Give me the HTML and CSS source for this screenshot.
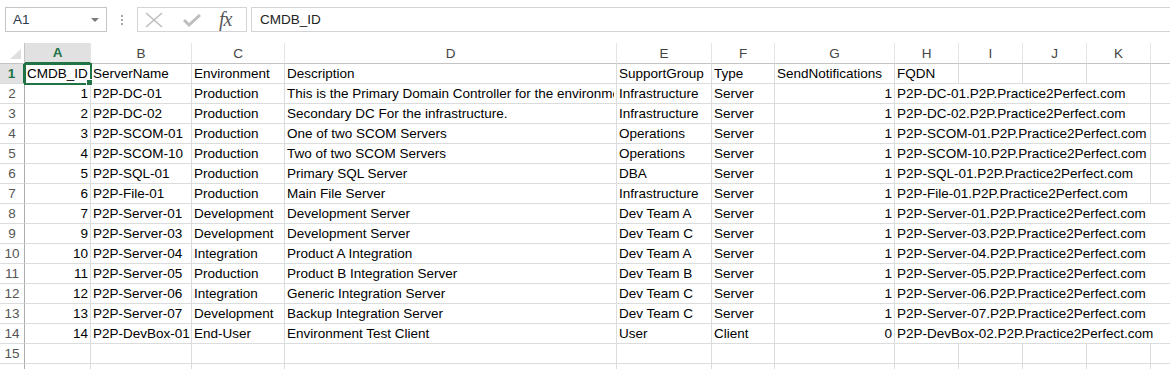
FILE: index.html
```html
<!DOCTYPE html>
<html lang="en">
<head>
  <meta charset="UTF-8">
  <title>CMDB - Sheet1</title>
  <link rel="stylesheet" href="styles.css">
</head>
<body>

  <!-- Formula Bar -->
  <div class="formula-bar">
    <div class="name-box">
      <span class="name-box-text">A1</span>
      <span class="name-box-arrow"></span>
    </div>
    <div class="grip">
      <span></span><span></span><span></span>
    </div>
    <div class="fx-buttons">
      <svg class="fx-icon" width="18" height="16" viewBox="0 0 18 16">
        <path d="M1 1 L17 15 M17 1 L1 15" stroke="#bdbdbd" stroke-width="1.6" fill="none"/>
      </svg>
      <svg class="fx-icon" width="18" height="16" viewBox="0 0 18 16">
        <path d="M1 8 L6 13 L17 3" stroke="#bdbdbd" stroke-width="3" fill="none"/>
      </svg>
      <span class="fx-label">fx</span>
    </div>
    <div class="formula-input">CMDB_ID</div>
  </div>

  <!-- Worksheet -->
  <table class="sheet">
    <colgroup>
      <col class="col-head">
      <col style="width:66px">
      <col style="width:101px">
      <col style="width:93px">
      <col style="width:332px">
      <col style="width:95px">
      <col style="width:63px">
      <col style="width:120px">
      <col style="width:64px">
      <col style="width:64px">
      <col style="width:64px">
      <col style="width:64px">
      <col style="width:64px">
    </colgroup>
    <thead>
      <tr>
        <th class="corner"><span class="corner-tri"></span></th>
        <th class="active-col">A</th>
        <th>B</th><th>C</th><th>D</th><th>E</th><th>F</th><th>G</th>
        <th>H</th><th>I</th><th>J</th><th>K</th><th></th>
      </tr>
    </thead>
    <tbody id="rows"></tbody>
  </table>

  <script>
    // Sheet data: id, server, environment, description, support group, type, notify, fqdn
    const data = [
      [1, 'P2P-DC-01', 'Production', 'This is the Primary Domain Controller for the environment.', 'Infrastructure', 'Server', 1, 'P2P-DC-01.P2P.Practice2Perfect.com'],
      [2, 'P2P-DC-02', 'Production', 'Secondary DC For the infrastructure.', 'Infrastructure', 'Server', 1, 'P2P-DC-02.P2P.Practice2Perfect.com'],
      [3, 'P2P-SCOM-01', 'Production', 'One of two SCOM Servers', 'Operations', 'Server', 1, 'P2P-SCOM-01.P2P.Practice2Perfect.com'],
      [4, 'P2P-SCOM-10', 'Production', 'Two of two SCOM Servers', 'Operations', 'Server', 1, 'P2P-SCOM-10.P2P.Practice2Perfect.com'],
      [5, 'P2P-SQL-01', 'Production', 'Primary SQL Server', 'DBA', 'Server', 1, 'P2P-SQL-01.P2P.Practice2Perfect.com'],
      [6, 'P2P-File-01', 'Production', 'Main File Server', 'Infrastructure', 'Server', 1, 'P2P-File-01.P2P.Practice2Perfect.com'],
      [7, 'P2P-Server-01', 'Development', 'Development Server', 'Dev Team A', 'Server', 1, 'P2P-Server-01.P2P.Practice2Perfect.com'],
      [9, 'P2P-Server-03', 'Development', 'Development Server', 'Dev Team C', 'Server', 1, 'P2P-Server-03.P2P.Practice2Perfect.com'],
      [10, 'P2P-Server-04', 'Integration', 'Product A Integration', 'Dev Team A', 'Server', 1, 'P2P-Server-04.P2P.Practice2Perfect.com'],
      [11, 'P2P-Server-05', 'Production', 'Product B Integration Server', 'Dev Team B', 'Server', 1, 'P2P-Server-05.P2P.Practice2Perfect.com'],
      [12, 'P2P-Server-06', 'Integration', 'Generic Integration Server', 'Dev Team C', 'Server', 1, 'P2P-Server-06.P2P.Practice2Perfect.com'],
      [13, 'P2P-Server-07', 'Development', 'Backup Integration Server', 'Dev Team C', 'Server', 1, 'P2P-Server-07.P2P.Practice2Perfect.com'],
      [14, 'P2P-DevBox-01', 'End-User', 'Environment Test Client', 'User', 'Client', 0, 'P2P-DevBox-02.P2P.Practice2Perfect.com']
    ];

    const body = document.getElementById('rows');

    // Header row (row 1)
    let html = '<tr><th class="row-num active-row">1</th>' +
      '<td class="selected">CMDB_ID<span class="handle"></span></td>' +
      '<td>ServerName</td><td>Environment</td><td>Description</td>' +
      '<td>SupportGroup</td><td>Type</td><td>SendNotifications</td>' +
      '<td>FQDN</td><td></td><td></td><td></td><td></td></tr>';

    // Data rows - FQDN text spills over the empty cells to its right
    data.forEach(function (row, i) {
      const span = row[7].length > 37 ? 5 : 4;
      html += '<tr><th class="row-num">' + (i + 2) + '</th>' +
        '<td class="num">' + row[0] + '</td>' +
        '<td>' + row[1] + '</td><td>' + row[2] + '</td>' +
        '<td><span class="clip">' + row[3] + '</span></td>' +
        '<td>' + row[4] + '</td><td>' + row[5] + '</td>' +
        '<td class="num">' + row[6] + '</td>' +
        '<td colspan="' + span + '">' + row[7] + '</td>' +
        (span === 4 ? '<td></td>' : '') + '</tr>';
    });

    // Empty rows at the bottom of the view
    html += '<tr><th class="row-num">15</th>' + '<td></td>'.repeat(12) + '</tr>';
    html += '<tr><th class="row-num"></th>' + '<td></td>'.repeat(12) + '</tr>';
    body.innerHTML = html;
  </script>

</body>
</html>
```

FILE: styles.css
```css
/* General Styles */
body {
  margin: 0;
  font-family: "Liberation Sans", Arial, sans-serif;
  font-size: 13.5px;
  color: #000;
  background: #ffffff;
  overflow: hidden;
}

/* Formula Bar */
.formula-bar {
  display: flex;
  align-items: stretch;
  height: 25px;
  margin-top: 7px;
  padding-left: 5px;
}

.name-box {
  border: 1px solid #c6c6c6;
  display: flex;
  align-items: center;
  justify-content: space-between;
  padding: 0 7px 0 7px;
  box-sizing: border-box;
  width: 102px;
}

.name-box-text {
  color: #2b3a4a;
  font-size: 13.5px;
}

.name-box-arrow {
  width: 0;
  height: 0;
  border-left: 4px solid transparent;
  border-right: 4px solid transparent;
  border-top: 4px solid #7a7a7a;
}

.grip {
  width: 30px;
  display: flex;
  flex-direction: column;
  align-items: center;
  justify-content: center;
  gap: 2px;
}

.grip span {
  width: 2px;
  height: 2px;
  background: #a8a8a8;
}

.fx-buttons {
  width: 110px;
  border: 1px solid #d4d4d4;
  box-sizing: border-box;
  display: flex;
  align-items: center;
  padding-left: 7px;
}

.fx-icon {
  margin-right: 20px;
}

.fx-label {
  font-family: "Liberation Serif", "Times New Roman", serif;
  font-style: italic;
  font-size: 20px;
  color: #5a5a5a;
  margin-left: -2px;
  letter-spacing: -1px;
}

.formula-input {
  flex: 1;
  margin-left: 4px;
  border: 1px solid #d4d4d4;
  border-right: none;
  display: flex;
  align-items: center;
  padding-left: 8px;
  color: #222;
}

/* Worksheet Grid */
.sheet {
  margin-top: 11px;
  border-collapse: separate;
  border-spacing: 0;
  table-layout: fixed;
  width: 1215px;
}

.col-head {
  width: 25px;
}

.sheet th,
.sheet td {
  box-sizing: border-box;
  height: 20px;
  padding: 0 2px;
  border-right: 1px solid #dadcdd;
  border-bottom: 1px solid #dadcdd;
  white-space: nowrap;
  overflow: hidden;
  line-height: 19px;
}

.sheet th {
  font-weight: normal;
  color: #444;
  text-align: center;
  border-color: #c4c4c4;
  background: #ffffff;
}

.sheet thead th {
  border-right-color: #e4e4e4;
}

.sheet .row-num {
  color: #555;
  border-right-color: #ababab;
  border-bottom-color: #dadcdd;
}

.sheet .corner {
  position: relative;
  border-right-color: #c4c4c4;
}

.corner-tri {
  position: absolute;
  right: 3px;
  bottom: 4px;
  width: 0;
  height: 0;
  border-left: 11px solid transparent;
  border-bottom: 10px solid #dfdfdf;
}

/* Active cell headers */
.sheet .active-col {
  background: #e1e1e1;
  color: #217346;
  font-weight: bold;
  border-bottom: 2px solid #217346;
}

.sheet .active-row {
  background: #e1e1e1;
  color: #217346;
  font-weight: bold;
  border-right: 2px solid #217346;
}

/* Cells */
.sheet td.num {
  text-align: right;
}

/* Long text clipped by the filled cell to its right */
.clip {
  display: block;
  overflow: hidden;
  padding-right: 1px;
}

.sheet td.selected {
  position: relative;
  overflow: visible;
  outline: 2px solid #217346;
  outline-offset: -1px;
}

.handle {
  position: absolute;
  right: -3px;
  bottom: -3px;
  width: 5px;
  height: 5px;
  background: #217346;
  border: 1px solid #ffffff;
}
```
